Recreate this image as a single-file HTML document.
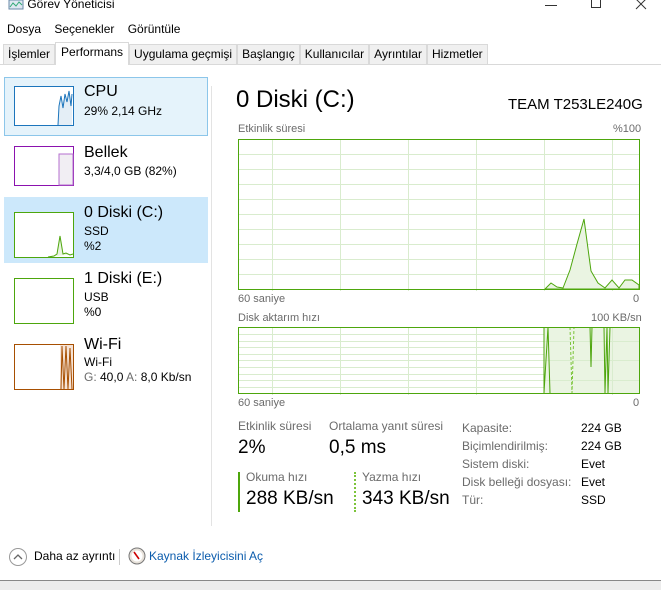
<!DOCTYPE html>
<html><head><meta charset="utf-8"><style>
*{margin:0;padding:0;box-sizing:border-box}
body{width:661px;height:590px;overflow:hidden;background:#fff;font-family:"Segoe UI","Liberation Sans",sans-serif;color:#000;position:relative}
.a{position:absolute;white-space:nowrap}
.g{color:#6b6b6b}
</style></head><body>
<div class="a" style="left:8px;top:-3px;font-size:12px">
<svg width="16" height="12" style="vertical-align:middle"><rect x="1" y="1" width="14" height="9" fill="#dfe8f2" stroke="#6a8aa8"/><polyline points="2,8 5,4 8,7 11,3 14,6" fill="none" stroke="#3a7"/></svg> Görev Yöneticisi</div>
<div class="a" style="left:545px;top:5px;width:12px;height:1px;background:#333"></div>
<div class="a" style="left:591px;top:-2px;width:10px;height:10px;border:1px solid #333"></div>
<svg class="a" style="left:635px;top:-2px" width="12" height="12"><path d="M1,1 L11,11 M11,1 L1,11" stroke="#333" stroke-width="1"/></svg>
<div class="a" style="left:7px;top:22px;font-size:12px">Dosya&nbsp;&nbsp;&nbsp; Seçenekler&nbsp;&nbsp;&nbsp; Görüntüle</div>
<div class="a" style="left:0;top:64px;width:661px;height:1px;background:#d9d9d9"></div>
<div class="a" style="left:3px;top:44px;height:21px;font-size:12px;display:flex">
<div style="border:1px solid #d9d9d9;background:#f0f0f0;padding:2px 4px;height:21px">İşlemler</div>
<div style="border:1px solid #d9d9d9;border-bottom:none;background:#fff;padding:0 5px;height:23px;margin-top:-2px;line-height:19px">Performans</div>
<div style="border:1px solid #d9d9d9;background:#f0f0f0;padding:2px 4px;height:21px">Uygulama geçmişi</div>
<div style="border:1px solid #d9d9d9;background:#f0f0f0;padding:2px 4px;height:21px">Başlangıç</div>
<div style="border:1px solid #d9d9d9;background:#f0f0f0;padding:2px 4px;height:21px">Kullanıcılar</div>
<div style="border:1px solid #d9d9d9;background:#f0f0f0;padding:2px 4px;height:21px">Ayrıntılar</div>
<div style="border:1px solid #d9d9d9;background:#f0f0f0;padding:2px 4px;height:21px">Hizmetler</div>
</div>
<!-- left panel -->
<div class="a" style="left:4px;top:77px;width:204px;height:59px;background:#e5f3fb;border:1px solid #8cc6ea"></div>
<div class="a" style="left:4px;top:197px;width:204px;height:66px;background:#cce8fb"></div>
<div class="a" style="left:211px;top:86px;width:1px;height:440px;background:#e3e3e3"></div>
<svg class="a" style="left:14px;top:86px" width="60" height="305">
<rect x="0.5" y="0.5" width="59" height="39" fill="#fff" stroke="#1c75bc"/>
<polygon points="44,39 45,20 47,10 49,22 51,8 53,16 55,5 57,20 58,8 58,39" fill="#e4eef6"/>
<polyline points="44,39 45,20 47,10 49,22 51,8 53,16 55,5 57,20 58,8" fill="none" stroke="#1c75bc"/>
<rect x="0.5" y="60.5" width="59" height="39" fill="#fff" stroke="#8b12ae"/>
<rect x="45" y="68" width="14" height="31" fill="#f1eef3" stroke="#b56fcf"/>
<rect x="0.5" y="126.5" width="59" height="45" fill="#fff" stroke="#4da60c"/>
<polyline points="34,171 40,170 43,168 46,150 49,168 52,167 56,169 59,168" fill="#e9f4e0" stroke="#4da60c"/>
<rect x="0.5" y="192.5" width="59" height="45" fill="#fff" stroke="#4da60c"/>
<rect x="0.5" y="258.5" width="59" height="45" fill="#fff" stroke="#a74f01"/>
<rect x="46" y="259" width="13" height="44" fill="#f6e3d6"/>
<polyline points="47,303 48,260 50,303 52,260 54,303 56,262 58,303" fill="none" stroke="#a74f01"/>
</svg>
<div class="a" style="left:84px;top:83px;font-size:16px">CPU</div>
<div class="a" style="left:84px;top:104px;font-size:12px">29% 2,14 GHz</div>
<div class="a" style="left:84px;top:144px;font-size:16px">Bellek</div>
<div class="a" style="left:84px;top:164px;font-size:12px">3,3/4,0 GB (82%)</div>
<div class="a" style="left:84px;top:204px;font-size:16px">0 Diski (C:)</div>
<div class="a" style="left:84px;top:224px;font-size:12px">SSD</div>
<div class="a" style="left:84px;top:239px;font-size:12px">%2</div>
<div class="a" style="left:84px;top:270px;font-size:16px">1 Diski (E:)</div>
<div class="a" style="left:84px;top:290px;font-size:12px">USB</div>
<div class="a" style="left:84px;top:305px;font-size:12px">%0</div>
<div class="a" style="left:84px;top:336px;font-size:16px">Wi-Fi</div>
<div class="a" style="left:84px;top:355px;font-size:12px">Wi-Fi</div>
<div class="a" style="left:84px;top:370px;font-size:12px"><span class="g">G:</span> 40,0 <span class="g">A:</span> 8,0 Kb/sn</div>
<!-- right -->
<div class="a" style="left:236px;top:86px;font-size:24px">0 Diski (C:)</div>
<div class="a" style="left:508px;top:96px;font-size:15px">TEAM T253LE240G</div>
<div class="a g" style="left:238px;top:123px;font-size:11px">Etkinlik süresi</div>
<div class="a g" style="left:613px;top:123px;font-size:11px">%100</div>
<svg class="a" style="left:238px;top:139px" width="402" height="152">
<g stroke="#d9ecce" stroke-width="1">
<line x1="0" y1="15.5" x2="402" y2="15.5"/><line x1="0" y1="30.5" x2="402" y2="30.5"/><line x1="0" y1="45.5" x2="402" y2="45.5"/><line x1="0" y1="60.5" x2="402" y2="60.5"/><line x1="0" y1="75.5" x2="402" y2="75.5"/><line x1="0" y1="90.5" x2="402" y2="90.5"/><line x1="0" y1="105.5" x2="402" y2="105.5"/><line x1="0" y1="120.5" x2="402" y2="120.5"/><line x1="0" y1="135.5" x2="402" y2="135.5"/>
<line x1="34.5" y1="0" x2="34.5" y2="152"/><line x1="102.5" y1="0" x2="102.5" y2="152"/><line x1="170.5" y1="0" x2="170.5" y2="152"/><line x1="238.5" y1="0" x2="238.5" y2="152"/><line x1="306.5" y1="0" x2="306.5" y2="152"/><line x1="374.5" y1="0" x2="374.5" y2="152"/>
</g>
<polygon points="307,150 313,144 319,148 325,149 332,131 339,105 346,80 353,132 360,144 367,149 374,141 381,149 387,141 394,141 401,146 401,150" fill="#eaf4e2" stroke="#4da60c"/>
<rect x="0.5" y="0.5" width="401" height="150" fill="none" stroke="#4da60c"/>
</svg>
<div class="a g" style="left:238px;top:293px;font-size:11px">60 saniye</div>
<div class="a g" style="left:633px;top:293px;font-size:11px">0</div>
<div class="a g" style="left:238px;top:312px;font-size:11px">Disk aktarım hızı</div>
<div class="a g" style="left:591px;top:312px;font-size:11px">100 KB/sn</div>
<svg class="a" style="left:238px;top:327px" width="402" height="68">
<g stroke="#d9ecce">
<line x1="0" y1="7.5" x2="402" y2="7.5"/><line x1="0" y1="14.5" x2="402" y2="14.5"/><line x1="0" y1="20.5" x2="402" y2="20.5"/><line x1="0" y1="27.5" x2="402" y2="27.5"/><line x1="0" y1="33.5" x2="402" y2="33.5"/><line x1="0" y1="40.5" x2="402" y2="40.5"/><line x1="0" y1="47.5" x2="402" y2="47.5"/><line x1="0" y1="53.5" x2="402" y2="53.5"/><line x1="0" y1="60.5" x2="402" y2="60.5"/>
<line x1="34.5" y1="0" x2="34.5" y2="68"/><line x1="102.5" y1="0" x2="102.5" y2="68"/><line x1="170.5" y1="0" x2="170.5" y2="68"/><line x1="238.5" y1="0" x2="238.5" y2="68"/>
</g>
<rect x="306" y="1" width="95" height="65" fill="#eaf4e2"/>
<g stroke="#d9ecce"><line x1="306" y1="14.5" x2="402" y2="14.5"/><line x1="306" y1="33.5" x2="402" y2="33.5"/><line x1="306" y1="53.5" x2="402" y2="53.5"/><line x1="374.5" y1="0" x2="374.5" y2="68"/></g>
<polyline points="306,0 306,66 310,0 312,66" fill="none" stroke="#4da60c"/>
<polyline points="332,0 334,66 336,0" fill="none" stroke="#7cc43a" stroke-dasharray="3,2"/>
<polyline points="352,0 353,40 354,0" fill="none" stroke="#4da60c"/>
<polyline points="366,0 367,66 369,0 370,66 372,0" fill="none" stroke="#4da60c"/>
<rect x="0.5" y="0.5" width="401" height="66" fill="none" stroke="#4da60c"/>
</svg>
<div class="a g" style="left:238px;top:397px;font-size:11px">60 saniye</div>
<div class="a g" style="left:633px;top:397px;font-size:11px">0</div>
<div class="a g" style="left:238px;top:419px;font-size:12px">Etkinlik süresi</div>
<div class="a g" style="left:329px;top:419px;font-size:12px">Ortalama yanıt süresi</div>
<div class="a" style="left:238px;top:437px;font-size:19px">2%</div>
<div class="a" style="left:329px;top:437px;font-size:19px">0,5 ms</div>
<div class="a" style="left:238px;top:472px;width:2px;height:40px;background:#4da60c"></div>
<div class="a" style="left:354px;top:472px;width:2px;height:40px;border-left:2px dotted #7cc43a"></div>
<div class="a g" style="left:246px;top:470px;font-size:12px">Okuma hızı</div>
<div class="a g" style="left:362px;top:470px;font-size:12px">Yazma hızı</div>
<div class="a" style="left:246px;top:488px;font-size:19px">288 KB/sn</div>
<div class="a" style="left:362px;top:488px;font-size:19px">343 KB/sn</div>
<div class="a g" style="left:462px;top:419px;font-size:12px;line-height:18px">Kapasite:<br>Biçimlendirilmiş:<br>Sistem diski:<br>Disk belleği dosyası:<br>Tür:</div>
<div class="a" style="left:581px;top:419px;font-size:12px;line-height:18px">224 GB<br>224 GB<br>Evet<br>Evet<br>SSD</div>
<!-- footer -->
<svg class="a" style="left:8px;top:547px" width="20" height="20"><circle cx="10" cy="10" r="8.5" fill="none" stroke="#999"/><polyline points="6,12 10,8 14,12" fill="none" stroke="#666" stroke-width="1.3"/></svg>
<div class="a" style="left:34px;top:549px;font-size:12px">Daha az ayrıntı</div>
<div class="a" style="left:119px;top:549px;width:1px;height:16px;background:#ccc"></div>
<svg class="a" style="left:128px;top:547px" width="18" height="18"><circle cx="9" cy="9" r="8" fill="#e8e2da" stroke="#777"/><circle cx="9" cy="9" r="5.5" fill="#fff"/><line x1="6" y1="5" x2="11" y2="12" stroke="#c00" stroke-width="1.6"/></svg>
<div class="a" style="left:149px;top:549px;font-size:12px;color:#0b5cad">Kaynak İzleyicisini Aç</div>
<div class="a" style="left:0;top:580px;width:661px;height:1px;background:#888"></div>
<div class="a" style="left:0;top:581px;width:661px;height:9px;background:#ececec"></div>
</body></html>
